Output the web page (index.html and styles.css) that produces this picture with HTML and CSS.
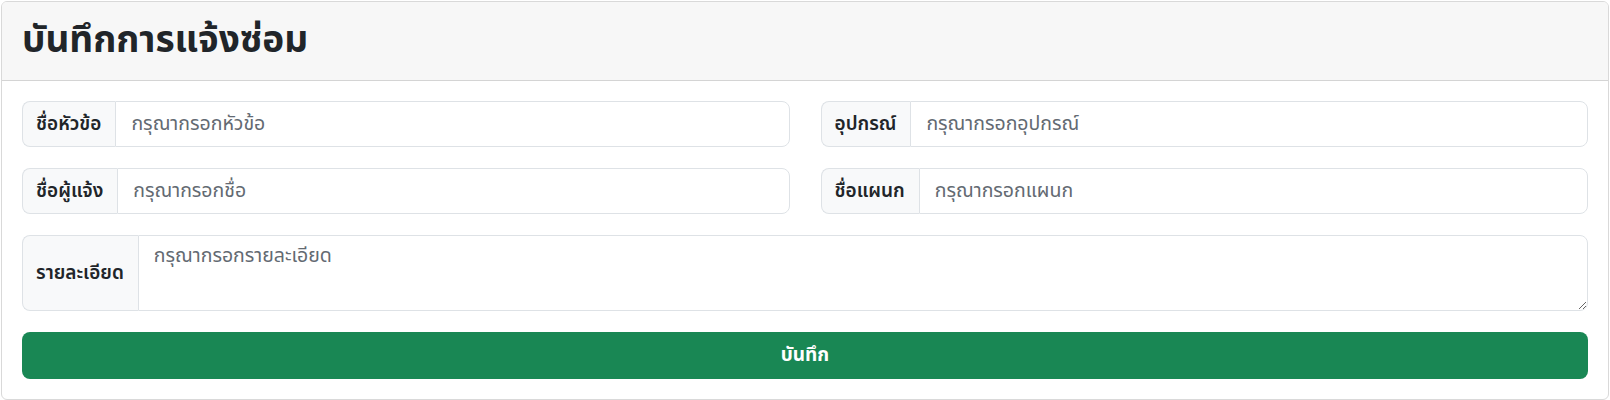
FILE: index.html
```html
<!DOCTYPE html>
<html lang="th">
<head>
<meta charset="utf-8">
<title>บันทึกการแจ้งซ่อม</title>
<link rel="stylesheet" href="styles.css">
</head>
<body>
<div class="page">
  <div class="card">
    <div class="card-header">
      <h1 class="title">บันทึกการแจ้งซ่อม</h1>
    </div>
    <form class="card-body">
      <div class="grid">
        <div class="input-group">
          <span class="addon">ชื่อหัวข้อ</span>
          <input class="control" type="text" placeholder="กรุณากรอกหัวข้อ">
        </div>
        <div class="input-group">
          <span class="addon">อุปกรณ์</span>
          <input class="control" type="text" placeholder="กรุณากรอกอุปกรณ์">
        </div>
        <div class="input-group">
          <span class="addon">ชื่อผู้แจ้ง</span>
          <input class="control" type="text" placeholder="กรุณากรอกชื่อ">
        </div>
        <div class="input-group">
          <span class="addon">ชื่อแผนก</span>
          <input class="control" type="text" placeholder="กรุณากรอกแผนก">
        </div>
        <div class="input-group wide">
          <span class="addon">รายละเอียด</span>
          <textarea class="control area" placeholder="กรุณากรอกรายละเอียด"></textarea>
        </div>
      </div>
      <button class="btn-save" type="button">บันทึก</button>
    </form>
  </div>
</div>
</body>
</html>
```
FILE: styles.css
```css
* { box-sizing: border-box; }
html, body { margin: 0; padding: 0; background: #fff; }
body {
  font-family: "Noto Sans Thai", "Leelawadee UI", Tahoma, "Noto Sans", "DejaVu Sans", sans-serif;
  color: #212529;
}
.page { padding: 1px; }
.card {
  border: 1px solid #d9d9d9;
  border-radius: 6px;
  background: #fff;
  overflow: hidden;
}
.card-header {
  background: #f7f7f7;
  border-bottom: 1px solid #d4d4d4;
  padding: 12px 20px;
  height: 79px;
  display: flex;
  align-items: center;
}
.title {
  margin: 0;
  font-size: 37px;
  font-weight: 700;
  line-height: 1.2;
  color: #212529;
}
.card-body {
  padding: 20px;
  margin: 0;
}
.grid {
  display: grid;
  grid-template-columns: 1fr 1fr;
  column-gap: 31px;
  row-gap: 21px;
}
.input-group {
  display: flex;
  align-items: stretch;
  height: 46px;
}
.input-group.wide {
  grid-column: 1 / -1;
  height: 76px;
}
.addon {
  display: flex;
  align-items: center;
  padding: 0 14px 0 13px;
  font-size: 19px;
  font-weight: 600;
  background: #f8f9fa;
  border: 1px solid #dee2e6;
  border-right: 0;
  border-radius: 8px 0 0 8px;
  white-space: nowrap;
  color: #212529;
}
.control {
  flex: 1;
  min-width: 0;
  font-family: inherit;
  font-size: 19.5px;
  color: #212529;
  padding: 0 15px;
  border: 1px solid #dee2e6;
  border-radius: 0 8px 8px 0;
  background: #fff;
  outline: none;
}
.control::placeholder { color: #636a72; opacity: 1; }
.area {
  padding: 6px 15px;
  line-height: 1.5;
  resize: vertical;
}
.btn-save {
  display: block;
  width: 100%;
  margin-top: 21px;
  height: 47px;
  border: 0;
  border-radius: 8px;
  background: #198754;
  color: #fff;
  font-family: inherit;
  font-size: 19px;
  font-weight: 700;
}
```
